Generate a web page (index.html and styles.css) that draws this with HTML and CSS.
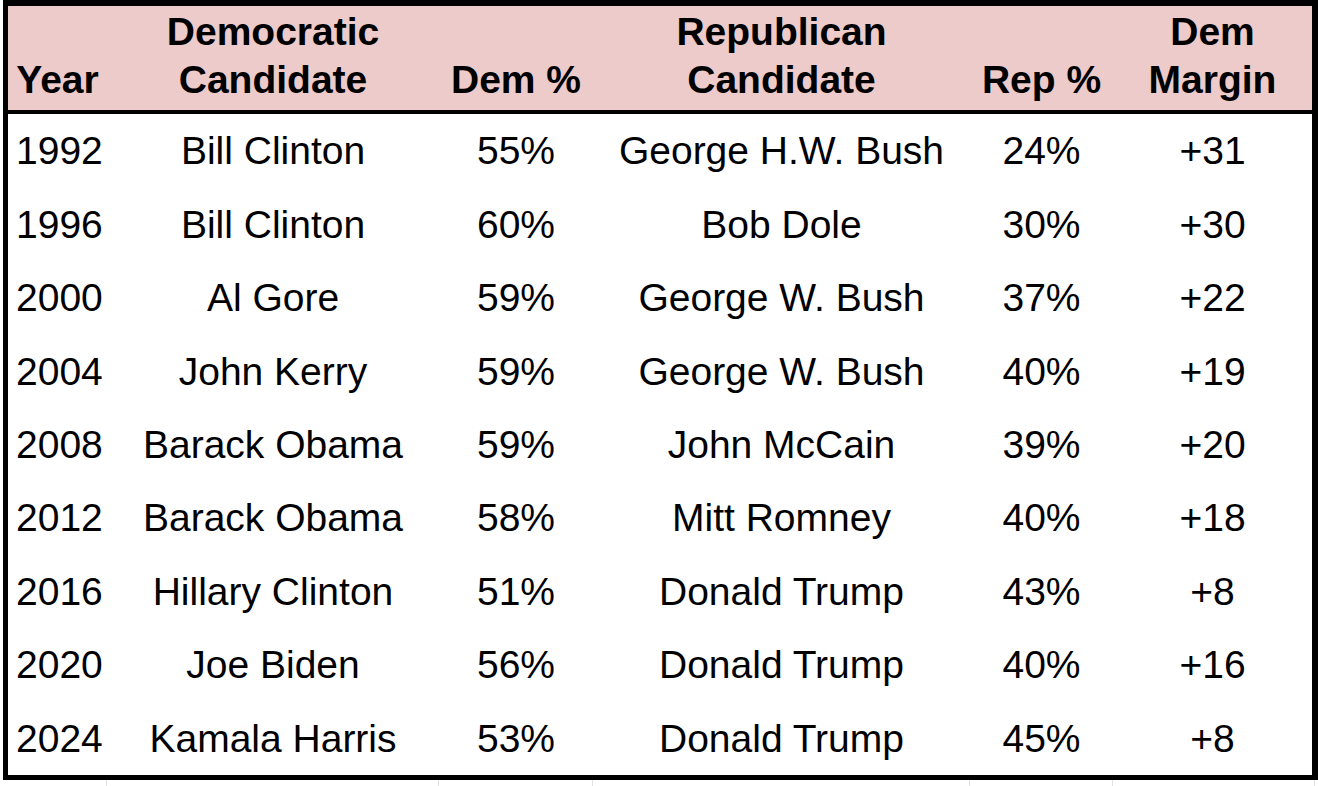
FILE: index.html
```html
<!DOCTYPE html>
<html lang="en">
<head>
<meta charset="utf-8">
<title>Presidential Results</title>
<link rel="stylesheet" href="styles.css">
</head>
<body>
<div class="sheet">
  <div class="table">
    <div class="row head">
      <div class="cell year">Year</div>
      <div class="cell">Democratic<br>Candidate</div>
      <div class="cell">Dem %</div>
      <div class="cell">Republican<br>Candidate</div>
      <div class="cell">Rep %</div>
      <div class="cell">Dem<br>Margin</div>
    </div>
    <div class="body">
      <div class="row"><div class="cell year">1992</div><div class="cell">Bill Clinton</div><div class="cell">55%</div><div class="cell">George H.W. Bush</div><div class="cell">24%</div><div class="cell">+31</div></div>
      <div class="row"><div class="cell year">1996</div><div class="cell">Bill Clinton</div><div class="cell">60%</div><div class="cell">Bob Dole</div><div class="cell">30%</div><div class="cell">+30</div></div>
      <div class="row"><div class="cell year">2000</div><div class="cell">Al Gore</div><div class="cell">59%</div><div class="cell">George W. Bush</div><div class="cell">37%</div><div class="cell">+22</div></div>
      <div class="row"><div class="cell year">2004</div><div class="cell">John Kerry</div><div class="cell">59%</div><div class="cell">George W. Bush</div><div class="cell">40%</div><div class="cell">+19</div></div>
      <div class="row"><div class="cell year">2008</div><div class="cell">Barack Obama</div><div class="cell">59%</div><div class="cell">John McCain</div><div class="cell">39%</div><div class="cell">+20</div></div>
      <div class="row"><div class="cell year">2012</div><div class="cell">Barack Obama</div><div class="cell">58%</div><div class="cell">Mitt Romney</div><div class="cell">40%</div><div class="cell">+18</div></div>
      <div class="row"><div class="cell year">2016</div><div class="cell">Hillary Clinton</div><div class="cell">51%</div><div class="cell">Donald Trump</div><div class="cell">43%</div><div class="cell">+8</div></div>
      <div class="row"><div class="cell year">2020</div><div class="cell">Joe Biden</div><div class="cell">56%</div><div class="cell">Donald Trump</div><div class="cell">40%</div><div class="cell">+16</div></div>
      <div class="row"><div class="cell year">2024</div><div class="cell">Kamala Harris</div><div class="cell">53%</div><div class="cell">Donald Trump</div><div class="cell">45%</div><div class="cell">+8</div></div>
    </div>
  </div>
  <div class="gridstrip">
    <div class="gc w1"></div><div class="gc w2"></div><div class="gc w3"></div><div class="gc w4"></div><div class="gc w5"></div><div class="gc w6"></div>
  </div>
</div>
</body>
</html>
```
FILE: styles.css
```css
html, body {
  margin: 0;
  padding: 0;
  background: #ffffff;
}

body {
  font-family: "Liberation Sans", Arial, Helvetica, sans-serif;
  color: #000000;
  font-size: 39px;
}

.sheet {
  padding-left: 3px;
  width: 1315px;
}

.table {
  border-style: solid;
  border-color: #000000;
  border-width: 6px 6px 5px 5px;
}

.row {
  display: grid;
  grid-template-columns: 99px 332px 154px 377px 143px 199px;
}

.head {
  height: 104px;
  background: #eccbca;
  border-bottom: 4px solid #000000;
  font-weight: bold;
}

.head .cell {
  display: flex;
  align-items: flex-end;
  justify-content: center;
  text-align: center;
  line-height: 48px;
  padding-bottom: 6px;
}

.body {
  height: 661px;
  display: grid;
  grid-template-rows: repeat(9, 1fr);
}

.body .cell {
  display: flex;
  align-items: center;
  justify-content: center;
  line-height: 39px;
  white-space: nowrap;
}

.body .cell.year {
  justify-content: flex-start;
  padding-left: 8px;
}

.gridstrip {
  display: flex;
  height: 6px;
}

.gc {
  border-right: 1px solid #e2e2e2;
  box-sizing: border-box;
}

.w1 { width: 104px; }
.w2 { width: 332px; }
.w3 { width: 154px; }
.w4 { width: 377px; }
.w5 { width: 143px; }
.w6 { width: 202px; }
```
